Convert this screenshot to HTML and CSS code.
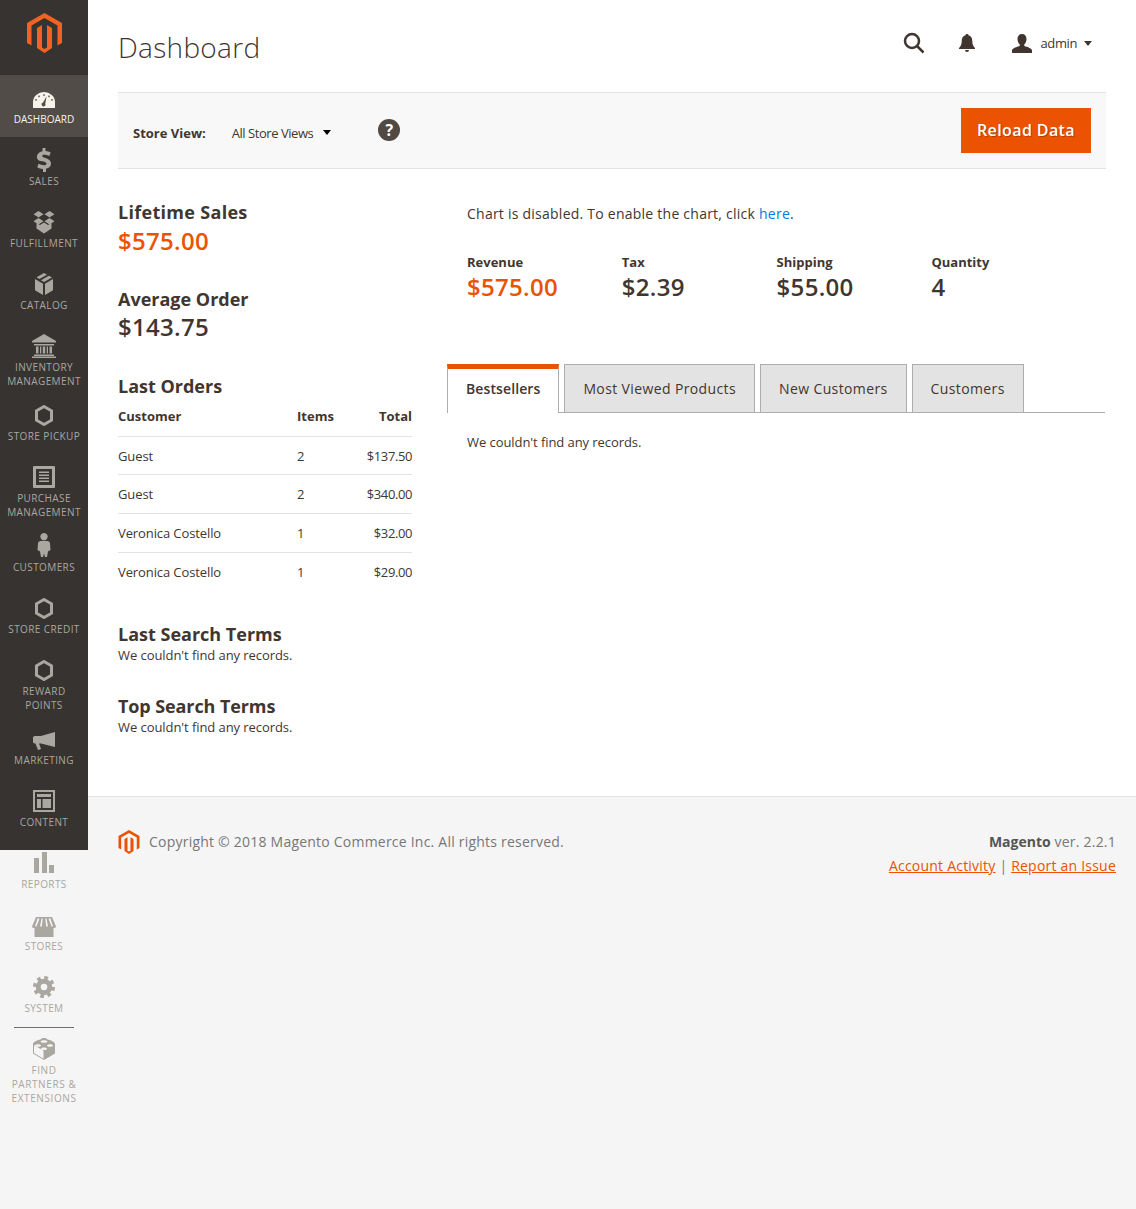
FILE: index.html
```html
<!DOCTYPE html>
<html lang="en">

<head>
  <meta charset="UTF-8">
  <meta name="viewport" content="width=device-width, initial-scale=1.0">
  <title>Dashboard / Magento Admin</title>
  <link rel="stylesheet" href="styles.css">
</head>

<body>

  <nav class="sidebar">
    <a class="logo" href="#">
      <svg width="35" height="40" viewBox="0 0 35 40"><path d="M17.5 0 35 10V30l-4.5 2.6V12.6L17.5 5 4.5 12.6V32.600L0 30V10z"/><path d="M10 15l5-3v22.500l2.500 1.500 2.500-1.500V12l5 3v20l-7.500 5L10 35z"/></svg>
    </a>
    <ul class="menu">
      <li class="menu-item active">
        <svg class="icon" width="22" height="18" viewBox="0 0 22 18"><path fill-rule="evenodd" d="M0 17v-6a11 10 0 0 1 22 0v6zM13.500 5.500 10 11.500a2 2 0 1 0 2.300 1zM11 3.200a.8.8 0 1 0 .01 0zM6 4.500a.8.8 0 1 0 .01 0zM16 4.500a.8.8 0 1 0 .01 0zM3 8a.8.8 0 1 0 .01 0zM19 8a.8.8 0 1 0 .01 0z"/></svg>
        <span>Dashboard</span>
      </li>
      <li class="menu-item">
        <svg class="icon" width="16" height="24" viewBox="0 0 16 24"><path d="M6.500 0h3v3c2 .2 3.900.8 5.200 1.600l-1.300 3.500C12 7.300 10.200 6.700 8.400 6.700c-1.500 0-2.200.5-2.200 1.300 0 .9 1 1.300 3.300 2.100 3.600 1.200 5.500 2.700 5.500 5.500 0 2.700-1.900 4.700-5 5.200V24h-3v-3c-2.200-.2-4.300-.9-5.700-1.800l1.300-3.600c1.500 1 3.500 1.700 5.400 1.700 1.600 0 2.500-.6 2.500-1.500 0-1-.9-1.500-3-2.200C3 13.200.9 11.800.9 8.800.9 6.200 2.700 4 6.500 3.200z"/></svg>
        <span>Sales</span>
      </li>
      <li class="menu-item">
        <svg class="icon" width="22" height="23" viewBox="0 0 22 23"><path d="M5.500 0 10.500 3.200 5.500 6.400.5 3.200zM16.500 0l5 3.200-5 3.200-5-3.200zM5.500 7 10.500 10.200 5.500 13.400.5 10.200zM16.500 7l5 3.200-5 3.200-5-3.200zM11 11.500l4 2.600 3.500-2v5.500L11 22.500l-7.500-4.900v-5.500l3.500 2z"/></svg>
        <span>Fulfillment</span>
      </li>
      <li class="menu-item">
        <svg class="icon" width="20" height="22" viewBox="0 0 20 22"><path d="M10 0l3 1.700-7.500 4.300-3-1.700zM14.800 2.700 18 4.500l-8 4.600-3-1.800zM1 6l8 4.700V22l-8-4.700zM19 6v11.300L11 22V10.700z"/></svg>
        <span>Catalog</span>
      </li>
      <li class="menu-item">
        <svg class="icon" width="26" height="24" viewBox="0 0 26 24"><path d="M13 0l12 7v1.500H1V7zM3 10h20v1.500H3zM5 12.500h2.500v7H5zM11.800 12.500h2.400v7h-2.400zM18.500 12.500H21v7h-2.500zM9 12.500h1.300v7H9zM15.700 12.500H17v7h-1.300zM3 20.500h20V22H3zM1 22.500h24V24H1z"/></svg>
        <span>Inventory Management</span>
      </li>
      <li class="menu-item">
        <svg class="icon hex" width="18" height="21" viewBox="0 0 18 21"><path d="M9 1.500 16.500 5.800v9.400L9 19.500 1.500 15.200V5.800z"/></svg>
        <span>Store Pickup</span>
      </li>
      <li class="menu-item">
        <svg class="icon" width="22" height="22" viewBox="0 0 22 22"><path fill-rule="evenodd" d="M1 0h20a1 1 0 0 1 1 1v20a1 1 0 0 1-1 1H1a1 1 0 0 1-1-1V1a1 1 0 0 1 1-1zM3 3v16h16V3zM6 5.500h10v1.500H6zM6 8.500h10V10H6zM6 11.500h10V13H6zM6 14.500h10V16H6z"/></svg>
        <span>Purchase Management</span>
      </li>
      <li class="menu-item">
        <svg class="icon person" width="14" height="24" viewBox="0 0 14 24"><path d="M7 0a3.700 3.700 0 1 1-.01 0zM3.500 8h7c1.500 0 2.500 1 2.500 2.500l.5 6.500-2.500 1.500-1 5.500H8l-1-3.500L6 24H4l-1-5.500L.5 17l.5-6.500C1 9 2 8 3.500 8z"/></svg>
        <span>Customers</span>
      </li>
      <li class="menu-item">
        <svg class="icon hex" width="18" height="21" viewBox="0 0 18 21"><path d="M9 1.500 16.500 5.800v9.400L9 19.500 1.500 15.200V5.800z"/></svg>
        <span>Store Credit</span>
      </li>
      <li class="menu-item">
        <svg class="icon hex" width="18" height="21" viewBox="0 0 18 21"><path d="M9 1.500 16.500 5.800v9.400L9 19.500 1.500 15.200V5.800z"/></svg>
        <span>Reward Points</span>
      </li>
      <li class="menu-item">
        <svg class="icon lower" width="22" height="18" viewBox="0 0 22 18"><path d="M22 0v15L8 11.500H6l2 5.500-3 1-2.500-6.500H1.500L0 10.500V5l1.500-1H8z"/></svg>
        <span>Marketing</span>
      </li>
      <li class="menu-item">
        <svg class="icon" width="22" height="22" viewBox="0 0 22 22"><path fill-rule="evenodd" d="M0 0h22v22H0zM2 2v18h18V2zM4 4h14v3H4zM4 9h4v9H4zM9.500 9H18v9H9.500z"/></svg>
        <span>Content</span>
      </li>
      <li class="menu-item">
        <svg class="icon" width="20" height="22" viewBox="0 0 20 22"><path d="M0 6h5v15H0zM8 0h5v21H8zM15 13h5v8h-5z"/></svg>
        <span>Reports</span>
      </li>
      <li class="menu-item">
        <svg class="icon lower" width="24" height="20" viewBox="0 0 24 20"><path fill-rule="evenodd" d="M4 0h16l4 9.500c-.3 1-1.300 1.700-2.500 1.700V20h-19v-8.800C1.300 11.200.3 10.500 0 9.500zM5.500 1.500 3 9.500h1.500l3-8zM9.500 1.500 8 9.500h1.800l1-8zM13.200 1.500l1 8H16l-1.500-8zM16.500 1.500l3 8H21l-2.500-8z"/></svg>
        <span>Stores</span>
      </li>
      <li class="menu-item">
        <svg class="icon" width="22" height="22" viewBox="0 0 22 22"><circle class="gear-teeth" cx="11" cy="11" r="9"/><circle class="gear-ring" cx="11" cy="11" r="5.800"/></svg>
        <span>System</span>
      </li>
      <li class="menu-item partners">
        <svg class="icon" width="22" height="22" viewBox="0 0 22 22"><path d="M11 0c1.800 0 3.200.6 3.400 1.500 3 .4 7.600 2.600 7.600 4.500v9.500L11 22 0 15.500V6c0-1.900 4.600-4.100 7.600-4.500C7.800.6 9.200 0 11 0zM1 7v8l9.500 5.700v-8zM11 4.800c1.900 0 3.400-.6 3.400-1.300S12.900 2.200 11 2.200 7.600 2.800 7.600 3.500 9.100 4.800 11 4.800zM5 8.800c1.700 0 3-.6 3-1.300s-1.300-1.300-3-1.300-3 .6-3 1.300 1.300 1.300 3 1.300zM17 8.800c1.700 0 3-.6 3-1.300s-1.300-1.300-3-1.300-3 .6-3 1.300 1.300 1.300 3 1.300zM11 12c1.700 0 3-.6 3-1.300s-1.300-1.300-3-1.300-3 .6-3 1.300 1.300 1.300 3 1.300z"/></svg>
        <span>Find Partners &amp; Extensions</span>
      </li>
    </ul>
  </nav>

  <div class="page">
    <main class="content">
      <header class="page-header">
        <h1>Dashboard</h1>
        <div class="actions">
          <svg class="search-icon" width="22" height="22" viewBox="0 0 22 22"><circle cx="9" cy="9" r="7"/><path d="M14 14l6.500 6.500"/></svg>
          <svg class="bell-icon" width="16" height="18" viewBox="0 0 16 18"><path d="M8 0c1 0 1.500.6 1.500 1.300C12 2 13.300 4 13.300 7c0 3.500.7 5 2.700 7v1H0v-1c2-2 2.700-3.500 2.700-7 0-3 1.300-5 3.800-5.700C6.500.6 7 0 8 0zM6 16h4a2 2 0 0 1-4 0z"/></svg>
          <div class="user">
            <svg width="20" height="19" viewBox="0 0 20 19"><path d="M10 0c3 0 4.500 2 4.500 5 0 2.500-1 4.300-2.200 5.300v1.700c3.500 1 7.700 2.500 7.700 4.500V19H0v-2.500c0-2 4.200-3.500 7.700-4.500v-1.700C6.500 9.300 5.500 7.500 5.500 5c0-3 1.500-5 4.500-5z"/></svg>
            <span>admin</span>
            <i class="caret"></i>
          </div>
        </div>
      </header>

      <div class="store-bar">
        <div class="store-view">
          <b>Store View:</b>
          <span class="store-select">All Store Views</span>
          <i class="caret black"></i>
          <span class="help">?</span>
        </div>
        <button>Reload Data</button>
      </div>

      <div class="columns">
        <section class="left">
          <h3 class="lifetime">Lifetime Sales</h3>
          <div class="big orange">$575.00</div>
          <h3 class="gap">Average Order</h3>
          <div class="big">$143.75</div>
          <h3 class="gap-orders">Last Orders</h3>
          <table class="orders">
            <thead>
              <tr><th>Customer</th><th>Items</th><th class="num">Total</th></tr>
            </thead>
            <tbody>
              <tr><td>Guest</td><td>2</td><td class="num">$137.50</td></tr>
              <tr><td>Guest</td><td>2</td><td class="num">$340.00</td></tr>
              <tr><td>Veronica Costello</td><td>1</td><td class="num">$32.00</td></tr>
              <tr><td>Veronica Costello</td><td>1</td><td class="num">$29.00</td></tr>
            </tbody>
          </table>
          <h3 class="gap-search">Last Search Terms</h3>
          <p class="empty terms">We couldn't find any records.</p>
          <h3 class="gap-top">Top Search Terms</h3>
          <p class="empty terms">We couldn't find any records.</p>
        </section>

        <section class="right">
          <p class="chart-note">Chart is disabled. To enable the chart, click <a href="#">here</a>.</p>
          <div class="stats">
            <div><b>Revenue</b><div class="big orange">$575.00</div></div>
            <div><b>Tax</b><div class="big">$2.39</div></div>
            <div><b>Shipping</b><div class="big">$55.00</div></div>
            <div><b>Quantity</b><div class="big">4</div></div>
          </div>
          <div class="tabs">
            <a class="tab current" href="#">Bestsellers</a>
            <a class="tab" href="#">Most Viewed Products</a>
            <a class="tab" href="#">New Customers</a>
            <a class="tab" href="#">Customers</a>
          </div>
          <p class="empty tab-body">We couldn't find any records.</p>
        </section>
      </div>
    </main>

    <footer class="footer">
      <div class="copyright">
        <svg width="22" height="24" viewBox="0 0 35 40"><path d="M17.500 0 35 10V30l-4.500 2.600V12.600L17.500 5 4.500 12.600V32.600L0 30V10z"/><path d="M10 15l5-3v22.500l2.500 1.500 2.500-1.500V12l5 3v20l-7.500 5L10 35z"/></svg>
        <span>Copyright © 2018 Magento Commerce Inc. All rights reserved.</span>
      </div>
      <div class="version">
        <p><b>Magento</b> ver. 2.2.1</p>
        <p><a href="#">Account Activity</a> | <a href="#">Report an Issue</a></p>
      </div>
    </footer>
  </div>

</body>

</html>
```

FILE: styles.css
```css
* {
  box-sizing: border-box;
}

body {
  margin: 0;
  display: flex;
  min-height: 100vh;
  font-family: "Open Sans", sans-serif;
  font-size: 13px;
  color: #41362f;
  background-color: #f5f5f5;
}

a {
  color: #007bdb;
  text-decoration: none;
}

/* sidebar: the dark panel stops at 850px, the menu keeps going */
.sidebar {
  flex: 0 0 88px;
  height: 850px;
  background-color: #373330;
}

.logo {
  display: flex;
  justify-content: center;
  height: 75px;
  padding-top: 13px;
}

.logo svg {
  fill: #f26322;
}

.menu {
  list-style: none;
  margin: 0;
  padding: 0;
}

.menu-item {
  display: grid;
  grid-template-rows: 37px auto;
  justify-items: center;
  min-height: 62px;
  padding: 0 4px 4px;
  color: #aaa6a0;
  fill: #aaa6a0;
  font-size: 10px;
  line-height: 14px;
  letter-spacing: 0.4px;
  text-align: center;
  text-transform: uppercase;
}

.menu-item.active {
  background-color: #514c48;
  color: #f7f3eb;
  fill: #f7f3eb;
  letter-spacing: 0;
}

.icon {
  align-self: center;
  margin-top: 9px;
}

.active .icon {
  margin-top: 13px;
}

.icon.lower {
  margin-top: 12px;
}

.icon.person {
  margin-top: 7px;
}

.hex {
  fill: none;
  stroke: #aaa6a0;
  stroke-width: 3;
}

.gear-teeth {
  fill: none;
  stroke: #aaa6a0;
  stroke-width: 4;
  stroke-dasharray: 3.5 3.57;
}

.gear-ring {
  fill: none;
  stroke: #aaa6a0;
  stroke-width: 5;
}

.partners {
  position: relative;
  padding: 0 10px 4px;
  letter-spacing: 0.6px;
}

.partners::before {
  content: "";
  position: absolute;
  top: 1px;
  left: 14px;
  width: 60px;
  border-top: 1px solid #736e69;
}

/* main area */
.page {
  flex: 1;
  display: flex;
  flex-direction: column;
  min-width: 0;
}

.content {
  background-color: #fff;
  padding: 0 30px;
  height: 796px;
}

.page-header {
  display: flex;
  justify-content: space-between;
  height: 92px;
}

h1 {
  margin: 29px 0 0;
  font-size: 28px;
  line-height: 36px;
  font-weight: 300;
  letter-spacing: 0.3px;
}

.actions {
  display: flex;
  align-items: center;
  height: 86px;
  padding-right: 14px;
}

.search-icon {
  fill: none;
  stroke: #41362f;
  stroke-width: 2.500;
  margin-right: 34px;
}

.bell-icon {
  fill: #41362f;
  margin-right: 37px;
}

.user {
  display: flex;
  align-items: center;
  fill: #41362f;
  letter-spacing: -0.4px;
}

.user span {
  margin: 0 7px 0 9px;
}

.caret {
  display: inline-block;
  border: 4px solid transparent;
  border-top: 5px solid #41362f;
  border-bottom: 0;
}

.caret.black {
  border-top-color: #000;
  margin-left: 10px;
}

.store-bar {
  display: flex;
  justify-content: space-between;
  align-items: center;
  height: 77px;
  padding: 0 15px;
  background-color: #f8f8f8;
  border-top: 1px solid #e3e3e3;
  border-bottom: 1px solid #e3e3e3;
}

.store-view {
  display: flex;
  align-items: center;
  padding-top: 4px;
}

.store-select {
  margin-left: 26px;
  letter-spacing: -0.45px;
}

.help {
  display: flex;
  justify-content: center;
  align-items: center;
  width: 22px;
  height: 22px;
  margin: -5px 0 0 47px;
  border-radius: 50%;
  background-color: #514943;
  color: #fff;
  font-size: 16px;
  font-weight: 700;
}

button {
  width: 130px;
  height: 45px;
  padding: 0 0 2px;
  border: 0;
  background-color: #eb5202;
  color: #fff;
  font-family: inherit;
  font-size: 16px;
  font-weight: 600;
  letter-spacing: 0.4px;
  text-shadow: 1px 1px 0 rgba(0, 0, 0, 0.25);
}

.columns {
  display: flex;
}

.left {
  flex: 0 0 294px;
  padding-top: 31px;
}

.right {
  flex: 1;
  margin-left: 35px;
  margin-right: 1px;
}

h3 {
  margin: 0;
  font-size: 18px;
  line-height: 25px;
  font-weight: 700;
}

.lifetime {
  margin-bottom: 1px;
  letter-spacing: 0.3px;
}

.big {
  font-size: 24px;
  line-height: 30px;
  font-weight: 600;
  letter-spacing: 0.3px;
}

.orange {
  color: #eb5202;
}

.gap {
  margin-top: 31px;
}

.gap-orders {
  margin-top: 32px;
}

.gap-search {
  margin-top: 31px;
}

.gap-top {
  margin-top: 30px;
  letter-spacing: -0.1px;
}

.orders {
  width: 100%;
  margin-top: 8px;
  border-collapse: collapse;
  letter-spacing: -0.1px;
}

.orders th,
.orders td {
  padding: 10px 0;
  line-height: 18px;
  text-align: left;
  font-weight: 400;
}

.orders th {
  padding: 0 0 11px;
  font-weight: 700;
  letter-spacing: 0;
}

.orders td {
  border-top: 1px solid #e3e3e3;
}

.orders tbody tr:first-child td {
  padding-bottom: 9px;
}

.orders th:first-child {
  width: 179px;
}

.orders th.num {
  text-align: right;
}

.orders td.num {
  text-align: right;
  letter-spacing: -0.4px;
}

.empty {
  margin: 0;
  line-height: 18px;
  letter-spacing: -0.07px;
}

.terms {
  margin-top: -1px;
}

.chart-note {
  margin: 35px 0 0 20px;
  font-size: 14px;
  line-height: 20px;
  letter-spacing: 0.24px;
}

.stats {
  display: grid;
  grid-template-columns: repeat(4, 154.8px);
  margin: 29px 0 0 20px;
}

.stats b {
  display: block;
  line-height: 18px;
}

.stats .big {
  margin-top: 1px;
}

.tabs {
  display: flex;
  gap: 5px;
  height: 49px;
  margin-top: 62px;
  border-bottom: 1px solid #adadad;
}

.tab {
  height: 49px;
  padding: 14px 18px 0;
  border: 1px solid #adadad;
  background-color: #e3e3e3;
  color: #41362f;
  font-size: 14px;
  line-height: 20px;
  letter-spacing: 0.38px;
}

.tab.current {
  border-top: 5px solid #eb5202;
  border-bottom: 0;
  padding-top: 10px;
  background-color: #fff;
  font-weight: 600;
  letter-spacing: 0.1px;
}

.tab-body {
  margin: 20px 0 0 20px;
}

.footer {
  flex: 1;
  display: flex;
  justify-content: space-between;
  padding: 33px 20px 0 30px;
  border-top: 1px solid #e3e3e3;
  color: #777;
  font-size: 14px;
  line-height: 24px;
  letter-spacing: 0.22px;
}

.copyright {
  display: flex;
  align-items: flex-start;
  gap: 9px;
  height: 24px;
}

.copyright svg {
  fill: #eb5202;
}

.version {
  text-align: right;
}

.version p {
  margin: 0;
}

.version b {
  font-weight: 700;
  color: #555;
  letter-spacing: 0;
}

.version a {
  color: #eb5202;
  text-decoration: underline;
}
```
